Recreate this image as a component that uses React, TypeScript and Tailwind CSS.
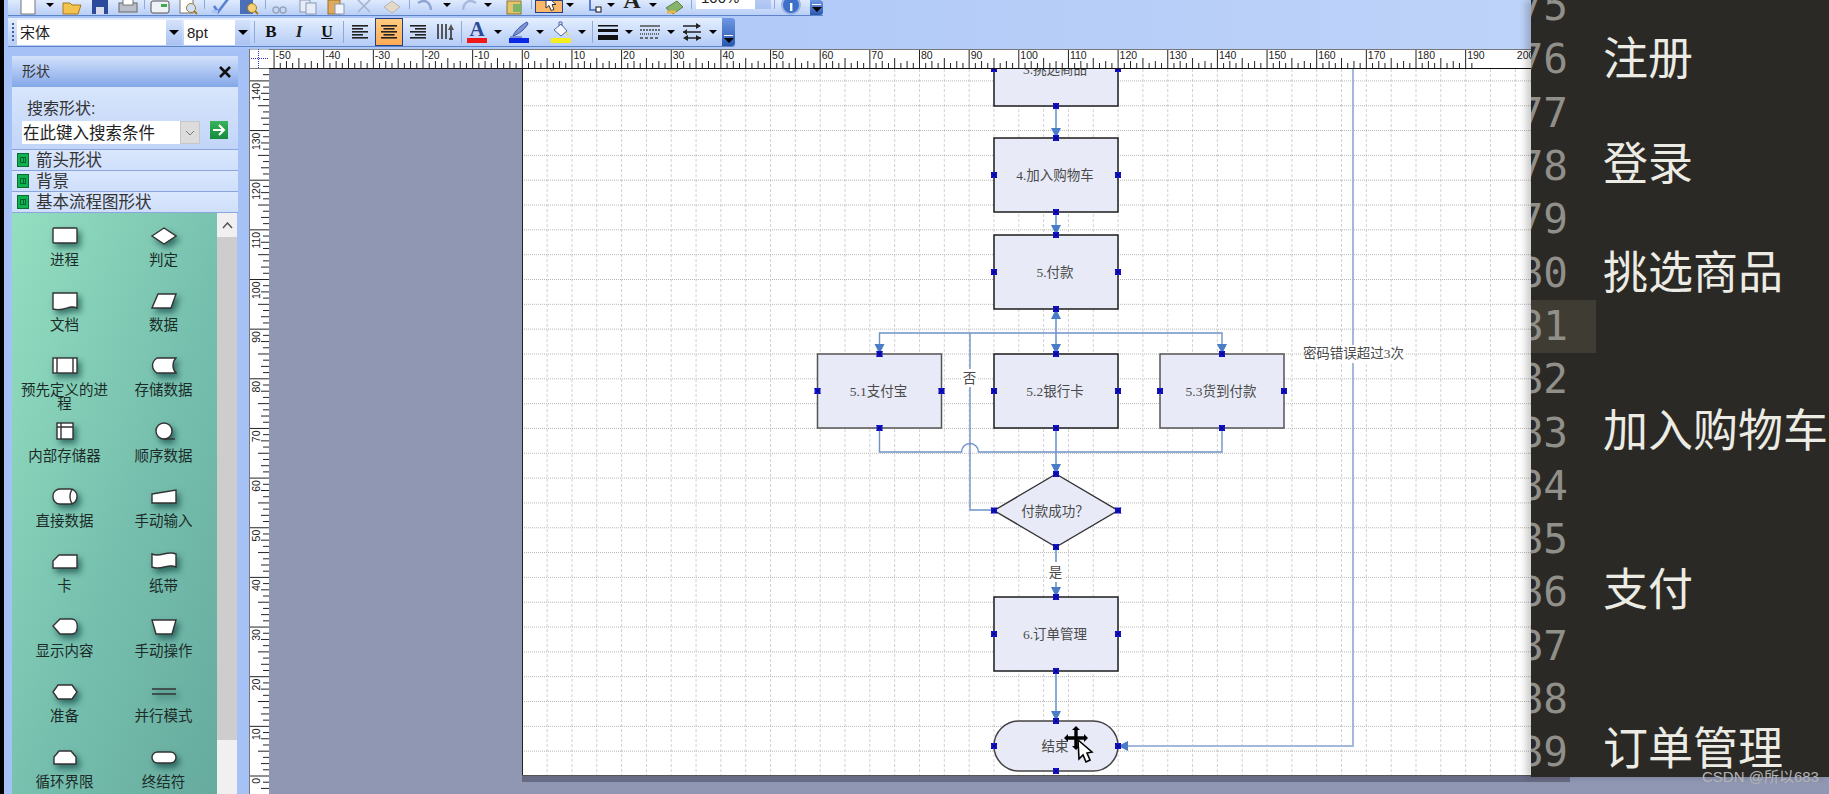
import React from 'react';

const serif = "font-['Liberation_Serif','Noto_Sans_CJK_SC',serif]";

const Btn = ({ children, className = '' }: { children?: React.ReactNode; className?: string }) => (
  <div className={`w-[28px] h-full shrink-0 flex items-center justify-center ${className}`}>{children}</div>
);
const Tri = ({ w = 'w-[14px]' }: { w?: string }) => (
  <div className={`${w} h-full shrink-0 flex items-center justify-center`}>
    <div className="w-0 h-0 border-x-[4px] border-x-transparent border-t-[4px] border-t-black" />
  </div>
);
const Sep = ({ className = '' }: { className?: string }) => (
  <div className={`w-px shrink-0 bg-[#8ea8d8] ${className}`} />
);
const EndCap = () => (
  <div className="ml-auto w-[13px] h-full shrink-0 rounded-r-[3px] bg-gradient-to-b from-[#6f98e4] to-[#2b58b0] flex flex-col items-center justify-end pb-[3px]">
    <div className="w-[9px] h-px bg-white mb-[2px]" />
    <div className="w-0 h-0 border-x-[5px] border-x-transparent border-t-[5px] border-t-black" />
  </div>
);

const I20 = ({ children }: { children: React.ReactNode }) => (
  <svg width="20" height="20" viewBox="0 0 20 20" className="shrink-0">{children}</svg>
);

const AlignIcon = ({ kind }: { kind: 'l' | 'c' | 'r' }) => {
  const rows = [16, 11, 16, 11, 16];
  return (
    <I20>
      {rows.map((w, i) => (
        <rect key={i} x={kind === 'l' ? 1 : kind === 'c' ? 10 - w / 2 : 19 - w} y={3 + i * 3} width={w} height="1.6" fill="#222" />
      ))}
    </I20>
  );
};

function Combo({ label, w, btn }: { label: string; w: string; btn: string }) {
  return (
    <div className={`${w} h-[25px] bg-white flex items-center shrink-0 text-[15px] text-[#222]`}>
      <span className="flex-1 pl-[3px] leading-none">{label}</span>
      <div className={`${btn} h-full bg-gradient-to-b from-[#d5e2fb] to-[#a9c2f2] flex items-center justify-center`}>
        <div className="w-0 h-0 border-x-[5px] border-x-transparent border-t-[5px] border-t-black" />
      </div>
    </div>
  );
}

function TopRow() {
  return (
    <div className="ml-[4px] h-[16px] w-[815px] overflow-hidden flex items-end pb-[6px] border-b border-[#5d84c9] bg-gradient-to-b from-[#dfeafd] to-[#b9cff7]">
      <div className="w-[6px] shrink-0" />
      <Btn><I20><rect x="3" y="0" width="14" height="19" fill="#fff" stroke="#777" /></I20></Btn>
      <Tri w="w-[16px]" />
      <Btn><I20><path d="M1 8h7l2 2h9l-3 9H1z" fill="#f3c24f" stroke="#a87a1c" /></I20></Btn>
      <Btn><I20><rect x="2" y="1" width="16" height="18" fill="#2c4a9c" /><rect x="6" y="12" width="8" height="7" fill="#d8dcea" /></I20></Btn>
      <Btn><I20><rect x="1" y="8" width="18" height="9" fill="#b9bfca" stroke="#666" /><rect x="5" y="3" width="10" height="7" fill="#fff" stroke="#777" /></I20></Btn>
      <Sep className="h-[14px] ml-[2px] mr-[1px]" />
      <Btn><I20><rect x="1" y="6" width="18" height="12" rx="2" fill="#eef1f6" stroke="#555" /><rect x="11" y="9" width="6" height="3" fill="#3fae4a" /></I20></Btn>
      <Btn><I20><rect x="2" y="1" width="13" height="17" fill="#fff" stroke="#777" /><circle cx="13" cy="13" r="4.5" fill="#cfe2fb" stroke="#a87a1c" /><path d="M16 16l3 3" stroke="#a87a1c" strokeWidth="2" /></I20></Btn>
      <Sep className="h-[14px] ml-[2px] mr-[2px]" />
      <Btn><I20><path d="M3 11l4 6L17 4" fill="none" stroke="#5a82d2" strokeWidth="2.6" /><rect x="1" y="15" width="6" height="3" fill="#a9c2f2" /></I20></Btn>
      <Btn><I20><rect x="1" y="4" width="13" height="15" fill="#4a6fb8" /><circle cx="13" cy="13" r="4.5" fill="#f1d27a" stroke="#a87a1c" /><path d="M16 16l3 3" stroke="#a87a1c" strokeWidth="2" /></I20></Btn>
      <Sep className="h-[14px] ml-[2px] mr-[0px]" />
      <Btn><I20><circle cx="6" cy="15" r="3" fill="none" stroke="#9aa5bd" strokeWidth="1.5" /><circle cx="13" cy="15" r="3" fill="none" stroke="#9aa5bd" strokeWidth="1.5" /></I20></Btn>
      <Btn><I20><rect x="2" y="5" width="10" height="12" fill="#e6ecf8" stroke="#8a97b4" /><rect x="8" y="8" width="10" height="11" fill="#e6ecf8" stroke="#8a97b4" /></I20></Btn>
      <Btn><I20><rect x="2" y="5" width="12" height="14" fill="#e2a95a" stroke="#94712f" /><rect x="9" y="9" width="9" height="10" fill="#f1f4fb" stroke="#8a97b4" /></I20></Btn>
      <Btn><I20><path d="M4 17l12-12M4 5l12 12" stroke="#a7b3ca" strokeWidth="1.6" /></I20></Btn>
      <Btn><I20><path d="M10 6l8 6-8 6-8-6z" fill="#e4d9c8" stroke="#b5b3b3" /></I20></Btn>
      <Sep className="h-[14px] ml-[3px] mr-[1px]" />
      <Btn><I20><path d="M3 8c6-4 12-2 13 7" fill="none" stroke="#8ea5d6" strokeWidth="2.4" /></I20></Btn>
      <Tri w="w-[16px]" />
      <Btn className="-mr-[2px]"><I20><path d="M17 8c-6-4-12-2-13 7" fill="none" stroke="#a9b9dc" strokeWidth="2.4" /></I20></Btn>
      <Tri />
      <div className="w-[6px] shrink-0" />
      <Btn><I20><rect x="2" y="6" width="14" height="13" fill="#e3c46a" stroke="#8b7430" /><rect x="8" y="9" width="9" height="8" fill="#7fb36c" /></I20></Btn>
      <Sep className="h-[14px] ml-[2px] mr-[3px]" />
      <div className="w-[28px] h-[13px] shrink-0 -mb-[4px] bg-[#fdb768] border border-[#24408a] flex items-end justify-center overflow-hidden">
        <svg width="16" height="13" viewBox="0 0 16 13"><path d="M5 -4v13l3-2.500 2 5 3-1-2-5 4 0z" fill="#fff" stroke="#333" /></svg>
      </div>
      <Tri />
      <div className="w-[4px] shrink-0" />
      <Btn className="-mr-[5px]"><I20><path d="M5 2v13h7" fill="none" stroke="#3a66c4" strokeWidth="1.6" /><rect x="11" y="12" width="5" height="5" fill="#fff" stroke="#111" /></I20></Btn>
      <Tri />
      <Btn><span className={`${serif} text-[24px] leading-none font-bold text-[#222] -mt-[9px]`}>A</span></Btn>
      <Tri />
      <Btn className="ml-px"><I20><path d="M1 13l11-7 6 6-10 7z" fill="#88b36a" stroke="#5d7f44" /><path d="M2 17h9" stroke="#e6b64a" strokeWidth="3" /></I20></Btn>
      <Sep className="h-[14px] ml-[2px] mr-[4px]" />
      <div className="w-[75px] h-[30px] -mt-[16px] shrink-0 flex items-center bg-white text-[15px] text-[#222]">
        <span className="flex-1 pl-[5px] pt-[9px]">100%</span>
        <div className="w-[16px] h-full bg-gradient-to-b from-[#d5e2fb] to-[#a9c2f2] flex items-end justify-center pb-[14px]">
          <div className="w-0 h-0 border-x-[3px] border-x-transparent border-t-[4px] border-t-black" />
        </div>
      </div>
      <Sep className="h-[14px] ml-[3px] mr-[2px]" />
      <Btn><I20><circle cx="10" cy="10" r="9" fill="#3f70c9" stroke="#9ab4e4" strokeWidth="2" /><rect x="9" y="8" width="2.4" height="8" fill="#fff" /></I20></Btn>
      <div className="self-stretch -mb-[6px] ml-auto flex"><EndCap /></div>
    </div>
  );
}

function FormatRow() {
  return (
    <div className="mt-[2px] ml-[4px] h-[29px] w-[727px] flex items-center border-b border-[#5d84c9] rounded-r-[3px] bg-gradient-to-b from-[#e4eefe] to-[#b5ccf6]">
      <div className="w-[9px] shrink-0 flex flex-col items-center gap-[2px]">
        {[0, 1, 2, 3, 4].map((i) => <div key={i} className="w-[2px] h-[2px] bg-[#3f5f9e]" />)}
      </div>
      <Combo label="宋体" w="w-[165px]" btn="w-[16px]" />
      <div className="w-[2px] shrink-0" />
      <Combo label="8pt" w="w-[66px]" btn="w-[15px]" />
      <Sep className="h-[22px] ml-[4px] mr-[2px]" />
      <Btn><span className={`${serif} text-[17px] font-bold text-[#111]`}>B</span></Btn>
      <Btn><span className={`${serif} text-[17px] font-bold italic text-[#222]`}>I</span></Btn>
      <Btn><span className={`${serif} text-[16px] font-bold underline text-[#111]`}>U</span></Btn>
      <Sep className="h-[22px] ml-[2px] mr-[3px]" />
      <Btn><AlignIcon kind="l" /></Btn>
      <Btn className="bg-gradient-to-b from-[#ffcb80] to-[#fdab55] border border-[#24408a] h-[27px]"><AlignIcon kind="c" /></Btn>
      <Btn><AlignIcon kind="r" /></Btn>
      <Btn>
        <I20>
          <path d="M3 2v15M7 2v15M11 2v15" stroke="#333" strokeWidth="1.6" />
          <path d="M16 2l3 6h-6z" fill="#555" />
          <path d="M16 8v9M14 17h4" stroke="#333" strokeWidth="1.6" />
        </I20>
      </Btn>
      <Sep className="h-[22px] ml-[2px] mr-px" />
      <Btn>
        <div className="flex flex-col items-center w-[20px]">
          <span className={`${serif} text-[21px] leading-[17px] font-bold text-[#2a4a96]`}>A</span>
          <div className="w-[20px] h-[5px] bg-[#f01818]" />
        </div>
      </Btn>
      <Tri />
      <Btn>
        <div className="flex flex-col items-center w-[20px]">
          <svg width="20" height="17" viewBox="0 0 20 17"><path d="M4 15C6 10 11 5 18 1l1 2C15 9 10 13 4 15z" fill="#7b94d6" stroke="#3a55a8" /><path d="M1 16h12" stroke="#3a55a8" /></svg>
          <div className="w-[20px] h-[5px] bg-[#0a28e6]" />
        </div>
      </Btn>
      <Tri />
      <Btn>
        <div className="flex flex-col items-center w-[20px]">
          <svg width="20" height="17" viewBox="0 0 20 17"><path d="M3 9l7-6 6 7-6 5z" fill="#f4f6fb" stroke="#4f6ca8" /><path d="M8 5V1h3v4" fill="none" stroke="#4f6ca8" /><path d="M16 10c2 2 2 4 1 5-1-1-2-3-1-5z" fill="#f1d64a" /></svg>
          <div className="w-[20px] h-[5px] bg-[#f7ec1c]" />
        </div>
      </Btn>
      <Tri />
      <Sep className="h-[22px] ml-[3px] mr-px" />
      <Btn>
        <I20>
          <rect x="0" y="3" width="20" height="1.5" fill="#111" />
          <rect x="0" y="7" width="20" height="3" fill="#111" />
          <rect x="0" y="13" width="20" height="5" fill="#111" />
        </I20>
      </Btn>
      <Tri />
      <Btn>
        <I20>
          <path d="M0 4h20" stroke="#444" strokeWidth="1.4" />
          <path d="M0 8h20" stroke="#444" strokeWidth="1.4" strokeDasharray="2 1" />
          <path d="M0 12h20" stroke="#444" strokeWidth="1.4" strokeDasharray="1 1" />
          <path d="M0 16h20" stroke="#444" strokeWidth="1.4" strokeDasharray="3 2" />
        </I20>
      </Btn>
      <Tri />
      <Btn>
        <I20>
          <path d="M1 4h15M1 10h18M4 16h15" stroke="#222" strokeWidth="1.4" />
          <path d="M19 4l-5-3v6zM1 10l4-3v6zM1 16l5-3v6zM19 16l-5-3v6z" fill="#222" />
        </I20>
      </Btn>
      <Tri />
      <EndCap />
    </div>
  );
}

const shapes: { label: string; draw: React.ReactNode }[] = [
  { label: '进程', draw: <rect x="1" y="3" width="24" height="15" rx="1" /> },
  { label: '判定', draw: <polygon points="1,11 13,3 25,11 13,19" /> },
  { label: '文档', draw: <path d="M1 3h24v15c-9-4-11 4-24 1z" /> },
  { label: '数据', draw: <polygon points="7,4 25,4 20,18 1,18" /> },
  { label: '预先定义的进程', draw: <g><rect x="1" y="3" width="24" height="15" /><path d="M5 3v15M21 3v15" /></g> },
  { label: '存储数据', draw: <path d="M6 3H25C21 7 21 14 25 18H6C0 14 0 7 6 3z" /> },
  { label: '内部存储器', draw: <g><rect x="5" y="2" width="16" height="16" /><path d="M9 2v16M5 6h16" /></g> },
  { label: '顺序数据', draw: <g><circle cx="13" cy="10" r="8" /><path d="M13 18h11" /></g> },
  { label: '直接数据', draw: <g><rect x="1" y="3" width="24" height="15" rx="7" /><path d="M21 3c-4 3-4 12 0 15" /></g> },
  { label: '手动输入', draw: <polygon points="1,8 25,4 25,17 1,17" /> },
  { label: '卡', draw: <polygon points="7,4 25,4 25,17 1,17 1,10" /> },
  { label: '纸带', draw: <path d="M1 3c8 4 15-4 24 0v13c-8-4-15 4-24 0z" /> },
  { label: '显示内容', draw: <path d="M8 3H20C27 3 27 18 20 18H8L1 10z" /> },
  { label: '手动操作', draw: <polygon points="1,4 25,4 21,18 5,18" /> },
  { label: '准备', draw: <polygon points="1,11 6,4 20,4 25,11 20,18 6,18" /> },
  { label: '并行模式', draw: <path d="M1 8h24M1 13h24" /> },
  { label: '循环界限', draw: <path d="M7 4h12l5 6v7H2v-7z" /> },
  { label: '终结符', draw: <rect x="1" y="5" width="24" height="11" rx="5.5" /> },
];

function ShapesPanel() {
  return (
    <div className="mt-[7px] w-[226px] shrink-0 flex flex-col overflow-hidden">
      <div className="h-[31px] shrink-0 flex items-center justify-between pl-[10px] pr-[6px] bg-gradient-to-b from-[#d3e2fb] to-[#84a7e8]">
        <span className="text-[14px] text-[#333]">形状</span>
        <svg width="14" height="14" viewBox="0 0 14 14"><path d="M2 2l10 10M12 2L2 12" stroke="#111" strokeWidth="2.6" /></svg>
      </div>
      <div className="h-[62px] shrink-0 pl-[10px] bg-gradient-to-b from-[#d8e6fc] to-[#c2d5f8]">
        <div className="pl-[5px] pt-[12px] h-[34px] text-[16px] leading-[20px] text-[#333]">搜索形状:</div>
        <div className="flex items-start">
          <div className="w-[158px] h-[23px] bg-white text-[16.5px] leading-[24px] pl-px text-[#222] whitespace-nowrap overflow-hidden">在此键入搜索条件</div>
          <div className="w-[20px] h-[23px] bg-[#dcdcdc] border border-[#c6c6c6] flex items-center justify-center">
            <svg width="10" height="6" viewBox="0 0 10 6"><path d="M1 1l4 4 4-4" fill="none" stroke="#777" /></svg>
          </div>
          <div className="ml-[10px] w-[18px] h-[18px] bg-gradient-to-b from-[#37b45a] to-[#148a3c] flex items-center justify-center">
            <svg width="14" height="12" viewBox="0 0 14 12"><path d="M1 6h10M7 1l5 5-5 5" fill="none" stroke="#fff" strokeWidth="2" /></svg>
          </div>
        </div>
      </div>
      {['箭头形状', '背景', '基本流程图形状'].map((name) => (
        <div key={name} className="h-[22px] shrink-0 flex items-center pl-[5px] border-y border-[#8aa6dc] -mb-px bg-gradient-to-b from-[#dae7fd] to-[#cfdffb] text-[16.5px] text-[#333]">
          <div className="w-[12px] h-[14px] bg-[#0fb24e] border border-[#0b6d33] flex items-center justify-center mr-[7px]">
            <div className="w-[6px] h-[6px] border border-[#063] bg-[linear-gradient(#063,#063)] bg-[length:1px_100%] bg-center bg-no-repeat" />
          </div>
          {name}
        </div>
      ))}
      <div className="flex flex-1 min-h-0 mt-px">
        <div className="w-[205px] shrink-0 pt-[6px] pl-[3px] bg-[linear-gradient(110deg,#94dfc1_0%,#76bfae_55%,#66ab9e_100%)] grid grid-cols-[99px_99px] auto-rows-[65.2px]">
          {shapes.map((s) => (
            <div key={s.label} className="flex flex-col items-center">
              <div className="h-[34px] flex items-center justify-center">
                <svg width="26" height="22" viewBox="0 0 26 22" fill="#fff" stroke="#333" strokeWidth="1.4" className="drop-shadow-[3px_4px_3px_rgba(0,50,50,0.6)]">
                  {s.draw}
                </svg>
              </div>
              <div className="text-[14.5px] leading-[14px] text-center text-[#1c2b28]">{s.label}</div>
            </div>
          ))}
        </div>
        <div className="w-[20px] shrink-0 flex flex-col bg-[#f0f0f0]">
          <div className="h-[24px] flex items-center justify-center">
            <svg width="11" height="7" viewBox="0 0 11 7"><path d="M1 6l4.5-5L10 6" fill="none" stroke="#555" strokeWidth="1.5" /></svg>
          </div>
          <div className="h-[503px] bg-[#cdcdcd]" />
        </div>
      </div>
    </div>
  );
}

const UNIT = 4.965;

function HorizontalRuler() {
  const ticks = Array.from({ length: 210 }, (_, i) => i - 8 * 7);
  return (
    <svg width="1262" height="20" className="block bg-white">
      {ticks.map((i) => {
        const x = 253.3 + (i * UNIT * 10) / 8;
        const h = i % 8 === 0 ? 19 : i % 4 === 0 ? 11 : i % 2 === 0 ? 8 : 6;
        return <line key={i} x1={x} x2={x} y1={20 - h} y2={20} stroke="#222" />;
      })}
      {Array.from({ length: 26 }, (_, i) => (i - 5) * 10).map((v) => (
        <text key={v} x={253.3 + v * UNIT + 1.5} y={10} fontSize="10.5" fill="#222">
          {v < 0 ? `-${-v}` : v}
        </text>
      ))}
      <line x1="0" x2="1262" y1="19.5" y2="19.5" stroke="#111" />
      <line x1="0" x2="1262" y1="0" y2="0" stroke="#777" strokeWidth="2" />
    </svg>
  );
}

function VerticalRuler() {
  const ticks = Array.from({ length: 130 }, (_, i) => i - 8);
  return (
    <svg width="20" height="725" className="block bg-white shrink-0">
      {ticks.map((i) => {
        const y = 707 - (i * UNIT * 10) / 8;
        const w = i % 8 === 0 ? 20 : i % 4 === 0 ? 11 : i % 2 === 0 ? 8 : 6;
        return <line key={i} x1={20 - w} x2={20} y1={y} y2={y} stroke="#222" />;
      })}
      {Array.from({ length: 15 }, (_, i) => i * 10).map((v) => {
        const y = 707 - v * UNIT + 2;
        return (
          <text key={v} x={11} y={y} fontSize="10.5" fill="#222" textAnchor="end" transform={`rotate(-90 11 ${y})`}>
            {v}
          </text>
        );
      })}
      <line x1="0.5" x2="0.5" y1="0" y2="725" stroke="#777" />
    </svg>
  );
}

const Mark = ({ x, y }: { x: number; y: number }) => (
  <g>
    <rect x={x - 3} y={y - 3} width="6" height="6" fill="#1414d8" />
    <path d={`M${x - 3} ${y - 3}l6 6M${x + 3} ${y - 3}l-6 6`} stroke="#000060" strokeWidth="0.8" />
  </g>
);

const Arrow = ({ x, y, dir }: { x: number; y: number; dir: 'd' | 'u' | 'l' }) => {
  const pts =
    dir === 'd'
      ? `${x},${y} ${x - 5},${y - 10} ${x + 5},${y - 10}`
      : dir === 'u'
        ? `${x},${y} ${x - 5},${y + 10} ${x + 5},${y + 10}`
        : `${x},${y} ${x + 10},${y - 5} ${x + 10},${y + 5}`;
  return <polygon points={pts} fill="#4a7cc8" />;
};

type NodeT = { x: number; y: number; w: number; h: number; cx: number; label: string; kind?: 'rect' | 'diamond' | 'pill' };

const nodes: NodeT[] = [
  { x: 994, y: 32, w: 124, h: 74, cx: 1056, label: '3.挑选商品' },
  { x: 994, y: 138, w: 124, h: 74, cx: 1056, label: '4.加入购物车' },
  { x: 994, y: 235, w: 124, h: 74, cx: 1056, label: '5.付款' },
  { x: 817.5, y: 354, w: 124, h: 74, cx: 879.5, label: '5.1支付宝' },
  { x: 994, y: 354, w: 124, h: 74, cx: 1056, label: '5.2银行卡' },
  { x: 1160, y: 354, w: 124, h: 74, cx: 1222, label: '5.3货到付款' },
  { x: 994, y: 474, w: 124, h: 73, cx: 1056, label: '付款成功？', kind: 'diamond' },
  { x: 994, y: 597, w: 124, h: 74, cx: 1056, label: '6.订单管理' },
  { x: 994, y: 721, w: 124, h: 50, cx: 1056, label: '结束', kind: 'pill' },
];

function Diagram() {
  const vLines = Array.from({ length: 43 }, (_, i) => 522.3 + i * 24.825);
  const hLines = Array.from({ length: 29 }, (_, i) => 776 - i * 24.825);
  const link = '#8aaad8';
  const thin = '#6f92c8';
  return (
    <svg width="1048" height="707" viewBox="522 69 1048 707" className="block bg-white">
      {vLines.map((x) => <line key={x} x1={x} x2={x} y1="69" y2="776" stroke="#d2d2d2" strokeDasharray="3 2" />)}
      {hLines.map((y) => <line key={y} x1="522" x2="1570" y1={y} y2={y} stroke="#b8b8b8" strokeDasharray="1 1" />)}
      <line x1="522.5" x2="522.5" y1="69" y2="776" stroke="#222" />
      <line x1="522" x2="1570" y1="775.5" y2="775.5" stroke="#555" />

      {/* connectors */}
      <g fill="none" strokeWidth="2" stroke={link}>
        <path d="M1056 106V130M1056 212V226M1056 318V345M1056 428V465M1056 547V588M1056 671V712" />
        <path d="M1353 69V746H1128" stroke="#a4b8dc" />
      </g>
      <g fill="none" strokeWidth="1.4" stroke={thin}>
        <path d="M879.5 345V333H1222V345" />
        <path d="M970 333V510H994" />
        <path d="M879.5 428V452H961.5a8 8 0 0 1 17 0H1222V428" />
      </g>
      <Arrow x={1056} y={138} dir="d" />
      <Arrow x={1056} y={235} dir="d" />
      <Arrow x={1056} y={309} dir="u" />
      <Arrow x={1056} y={354} dir="d" />
      <Arrow x={879.5} y={354} dir="d" />
      <Arrow x={1222} y={354} dir="d" />
      <Arrow x={1056} y={474} dir="d" />
      <Arrow x={1056} y={597} dir="d" />
      <Arrow x={1056} y={721} dir="d" />
      <Arrow x={1118} y={746} dir="l" />

      {/* labels on lines */}
      <rect x="962" y="369" width="16" height="18" fill="#fff" />
      <rect x="1047" y="562" width="18" height="20" fill="#fff" />
      <rect x="1301" y="345" width="105" height="18" fill="#fff" />

      {nodes.map((n) => {
        const my = n.y + n.h / 2;
        const stroke = n.label.startsWith('5.1') || n.label.startsWith('5.3') ? '#555' : '#1c1c1c';
        return (
          <g key={n.label}>
            {n.kind === 'diamond' ? (
              <polygon points={`${n.x},${my} ${n.cx},${n.y} ${n.x + n.w},${my} ${n.cx},${n.y + n.h}`} fill="#e8ebf7" stroke="#333" strokeWidth="1.4" />
            ) : (
              <rect x={n.x} y={n.y} width={n.w} height={n.h} rx={n.kind === 'pill' ? 25 : 0} fill="#e8ebf7" stroke={n.kind === 'pill' ? '#444' : stroke} strokeWidth="1.5" />
            )}
            <text x={n.cx - 1} y={my + 5} fontSize="13.5" fill="#4a4a4a" textAnchor="middle" className={serif}>{n.label}</text>
            <Mark x={n.x} y={my} />
            <Mark x={n.x + n.w} y={my} />
            <Mark x={n.cx} y={n.y} />
            <Mark x={n.cx} y={n.y + n.h} />
          </g>
        );
      })}

      <g fontSize="13.5" fill="#4a4a4a" textAnchor="middle" className={serif}>
        <text x="969.5" y="383">否</text>
        <text x="1055.5" y="577">是</text>
        <text x="1353.5" y="358">密码错误超过3次</text>
      </g>

      {/* move cursor */}
      <g>
        <path d="M1076 729v18M1067 738h18" stroke="#000" strokeWidth="3.4" />
        <path d="M1076 726l-4 4h8zM1076 750l-4-4h8zM1064 738l4-4v8zM1088 738l-4-4v8z" fill="#000" />
        <path d="M1078 740l1 19 4-4 3 7 4-2-3-7 5-1z" fill="#fff" stroke="#000" strokeWidth="1.6" />
      </g>
    </svg>
  );
}

const lineRows: { n: number; text?: string; lift?: string }[] = [
  { n: 75 }, { n: 76, text: '注册', lift: 'pb-[8px]' }, { n: 77 }, { n: 78, text: '登录', lift: 'pb-[13px]' }, { n: 79 }, { n: 80, text: '挑选商品', lift: 'pb-[8px]' }, { n: 81 },
  { n: 82 }, { n: 83, text: '加入购物车', lift: 'pb-[11px]' }, { n: 84 }, { n: 85 }, { n: 86, text: '支付', lift: 'pb-[13px]' }, { n: 87 }, { n: 88 }, { n: 89, text: '订单管理', lift: 'pb-[15px]' },
];

function EditorPane() {
  return (
    <div className="relative z-10 w-[298px] h-[777px] shrink-0 overflow-hidden bg-[#2a2925] shadow-[-5px_0_7px_rgba(0,0,0,0.2)]">
      <div className="-mt-[20px]">
        {lineRows.map((row) => (
          <div key={row.n} className="h-[53.3px] flex items-center">
            <div className={`w-[65px] h-full shrink-0 pr-[28px] flex items-center justify-end overflow-hidden ${row.n === 81 ? 'bg-[#3f3c34]' : ''}`}>
              <span className="font-['DejaVu_Sans_Mono',monospace] text-[41px] text-[#908f8a] leading-none">{row.n}</span>
            </div>
            {row.text && (
              <span className={`ml-[7px] ${row.lift} whitespace-nowrap font-['Noto_Sans_CJK_SC',sans-serif] text-[45px] leading-none text-[#ecebe4]`}>{row.text}</span>
            )}
          </div>
        ))}
      </div>
    </div>
  );
}

export default function App() {
  return (
    <div className="relative flex w-[1829px] h-[794px] overflow-hidden bg-[#8f97b3] font-['Liberation_Sans','Noto_Sans_CJK_SC',sans-serif]">
      <div className="w-[4px] shrink-0 bg-black" />
      <div className="w-[1527px] shrink-0 flex flex-col">
        <div className="h-[49px] shrink-0 bg-gradient-to-r from-[#a5c1f6] to-[#bed3f9]">
          <TopRow />
          <FormatRow />
        </div>
        <div className="flex h-[745px]">
          <div className="flex shrink-0 pl-[8px] pr-[11px] bg-[#a5c1f6]">
            <ShapesPanel />
          </div>
          <div className="flex-1 min-w-0 flex flex-col">
            <div className="flex h-[20px] shrink-0 border-0">
              <svg width="20" height="20" className="block bg-white shrink-0">
                <path d="M9.5 0V20M0 9.5H20" stroke="#2a2ad0" strokeDasharray="1 1" />
                <path d="M0 19.5H20M0.5 0V20M0 0H20" stroke="#777" />
              </svg>
              <HorizontalRuler />
            </div>
            <div className="flex flex-1 min-h-0">
              <VerticalRuler />
              <div className="flex-1 min-w-0">
                <div className="ml-[253px] w-[1048px] h-[707px] shadow-[0_6px_0_#686b84]">
                  <Diagram />
                </div>
              </div>
            </div>
          </div>
        </div>
      </div>
      <EditorPane />
      <div className="absolute z-20 left-[1702px] top-[768px] text-[15px] leading-[18px] text-[#b4b4b4] whitespace-nowrap">CSDN @所以683</div>
    </div>
  );
}
